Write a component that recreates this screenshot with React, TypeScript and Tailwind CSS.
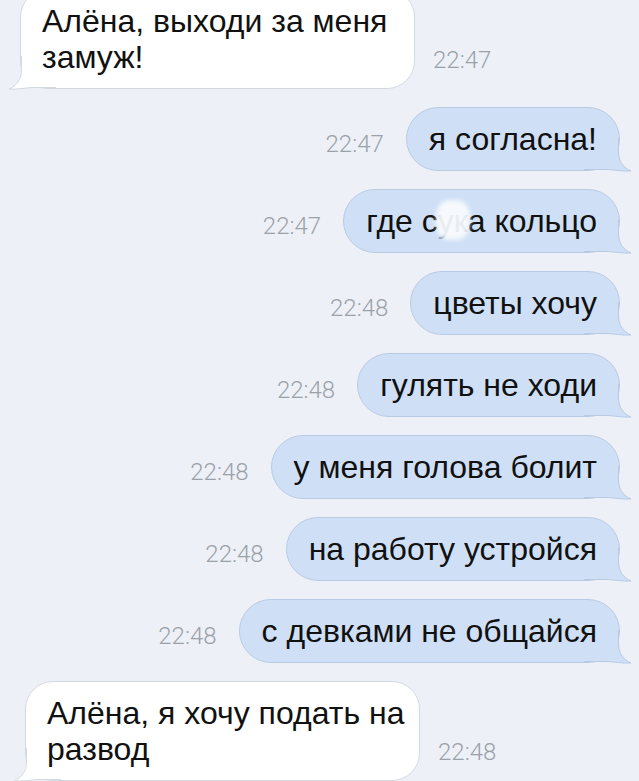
import React from 'react';

const outgoing = [
  { text: 'я согласна!', time: '22:47' },
  { text: 'где сука кольцо', time: '22:47', blur: true },
  { text: 'цветы хочу', time: '22:48' },
  { text: 'гулять не ходи', time: '22:48' },
  { text: 'у меня голова болит', time: '22:48' },
  { text: 'на работу устройся', time: '22:48' },
  { text: 'с девками не общайся', time: '22:48' },
];

function Tail({ fill, stroke, flip }: { fill: string; stroke: string; flip?: boolean }) {
  return (
    <svg
      width="48"
      height="36"
      viewBox="0 0 48 36"
      className={flip ? 'absolute -left-[13px] -bottom-[4px] -scale-x-100' : 'absolute -right-[13px] -bottom-[4px]'}
    >
      <path d="M0 0 H35 V14 C35 24 40 30 47 33 C39 33.5 31 32 24 31 H0 Z" fill={fill} />
      <path
        d="M34.5 0 V14 C34.5 24 40 30 47 33 C39 33.5 31 32 24 31.5 H0"
        fill="none"
        stroke={stroke}
        strokeWidth="1"
      />
    </svg>
  );
}

function Time({ children }: { children: React.ReactNode }) {
  return (
    <span className="font-['Roboto',sans-serif] font-light text-[24px] leading-none text-[#9ba1a9]">
      {children}
    </span>
  );
}

function Incoming({ lines, time }: { lines: string[]; time: string }) {
  return (
    <div className="flex items-end pl-[20px]">
      <div className="relative w-[395px] rounded-[28px] border border-[#d3d9e1] bg-white px-[21px] py-[13px]">
        <Tail fill="#ffffff" stroke="#d3d9e1" flip />
        {lines.map((l) => (
          <div key={l} className="relative z-10 whitespace-nowrap text-[32px] leading-[36px] text-[#111]">
            {l}
          </div>
        ))}
      </div>
      <div className="mb-[14px] ml-[18px]">
        <Time>{time}</Time>
      </div>
    </div>
  );
}

export default function App() {
  return (
    <div className="h-[781px] w-[639px] overflow-hidden bg-[#edf1f7] font-['Liberation_Sans',Arial,sans-serif]">
      <div className="flex flex-col gap-[18px]">
        <div className="-mt-[11px]">
          <Incoming lines={['Алёна, выходи за меня', 'замуж!']} time="22:47" />
        </div>

        {outgoing.map((m, i) => (
          <div key={i} className="flex items-center justify-end pr-[19px]">
            <div className="mr-[22px] mt-[12px]">
              <Time>{m.time}</Time>
            </div>
            <div className="relative flex h-[64px] items-center rounded-[32px] border border-[#b9cbe2] bg-[#cfe0f6] px-[22px]">
              <Tail fill="#cfe0f6" stroke="#b9cbe2" />
              <span className="relative z-10 whitespace-nowrap text-[32px] leading-none text-[#111]">
                {m.blur ? (
                  <>
                    где с
                    <span className="relative text-[#8f9fb4]">
                      ук
                      <span className="absolute -inset-x-[2px] -top-[3px] -bottom-[1px] rounded-[40%] bg-white/80 blur-[2px]" />
                    </span>
                    а кольцо
                  </>
                ) : (
                  m.text
                )}
              </span>
            </div>
          </div>
        ))}

        <div className="pl-[5px]">
          <Incoming lines={['Алёна, я хочу подать на', 'развод']} time="22:48" />
        </div>
      </div>
    </div>
  );
}
